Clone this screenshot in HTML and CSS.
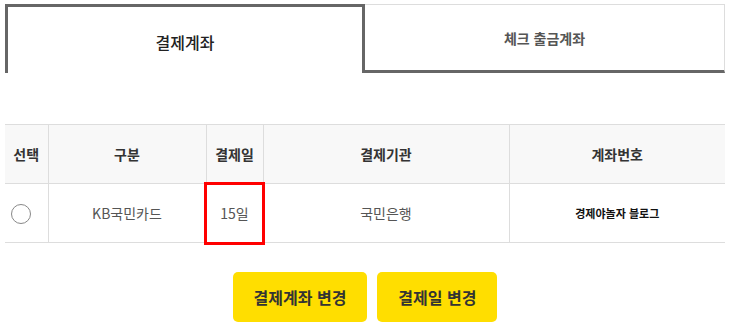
FILE: index.html
```html
<!DOCTYPE html>
<html lang="ko">
<head>
  <meta charset="UTF-8">
  <title>결제계좌 변경</title>
  <link rel="stylesheet" href="styles.css">
</head>
<body>

<div class="tabs">
  <div class="tab active">결제계좌</div>
  <div class="tab">체크 출금계좌</div>
</div>

<table class="account-table">
  <colgroup>
    <col class="col-select">
    <col class="col-type">
    <col class="col-day">
    <col class="col-bank">
    <col class="col-account">
  </colgroup>
  <thead>
    <tr>
      <th>선택</th>
      <th>구분</th>
      <th>결제일</th>
      <th>결제기관</th>
      <th>계좌번호</th>
    </tr>
  </thead>
  <tbody>
    <tr>
      <td><span class="radio"></span></td>
      <td>KB국민카드</td>
      <td class="highlight">15일</td>
      <td>국민은행</td>
      <td class="account-no">경제야놀자 블로그</td>
    </tr>
  </tbody>
</table>

<div class="buttons">
  <button class="btn">결제계좌 변경</button>
  <button class="btn">결제일 변경</button>
</div>

</body>
</html>
```

FILE: styles.css
```css
body {
  margin: 0;
  padding: 4px 5px 0;
  font-family: "Noto Sans CJK KR", "Noto Sans", sans-serif;
  background: #fff;
  color: #333;
  width: 720px;
}
.tabs {
  display: flex;
  height: 69px;
}
.tab {
  flex: 1;
  display: flex;
  align-items: center;
  justify-content: center;
  box-sizing: border-box;
  border-top: 1px solid #ddd;
  border-right: 1px solid #ddd;
  border-bottom: 3px solid #666;
  font-size: 14px;
  font-weight: bold;
  color: #555;
}
.tab.active {
  flex: 0 0 360px;
  border: 3px solid #666;
  border-bottom: none;
  font-size: 16px;
  font-weight: 500;
  color: #222;
  padding-top: 3px;
}
.account-table {
  margin-top: 51px;
  width: 720px;
  border-collapse: collapse;
  table-layout: fixed;
}
.col-select { width: 43px; }
.col-type { width: 158px; }
.col-day { width: 57px; }
.col-bank { width: 246px; }
.col-account { width: 216px; }
.account-table th,
.account-table td {
  height: 58px;
  padding: 0;
  text-align: center;
  border-top: 1px solid #ddd;
  border-bottom: 1px solid #ddd;
  border-left: 1px solid #ddd;
}
.account-table th:first-child,
.account-table td:first-child {
  border-left: none;
}
.account-table th {
  background: #f8f8f8;
  font-size: 14px;
  font-weight: bold;
  color: #333;
}
.account-table td {
  font-size: 14px;
  color: #555;
}
.account-table td.highlight {
  outline: 3px solid #f00;
  outline-offset: -1px;
}
.account-table td.account-no {
  font-size: 11px;
  font-weight: bold;
  color: #111;
}
.radio {
  display: inline-block;
  width: 18px;
  height: 18px;
  margin-right: 10px;
  border: 1px solid #888;
  border-radius: 50%;
  vertical-align: middle;
}
.buttons {
  display: flex;
  justify-content: center;
  gap: 10px;
  margin-top: 29px;
}
.btn {
  height: 50px;
  padding: 0 21px;
  background: #ffde00;
  color: #333;
  border: none;
  border-radius: 5px;
  font-family: inherit;
  font-size: 16px;
  font-weight: bold;
  cursor: pointer;
}
```
